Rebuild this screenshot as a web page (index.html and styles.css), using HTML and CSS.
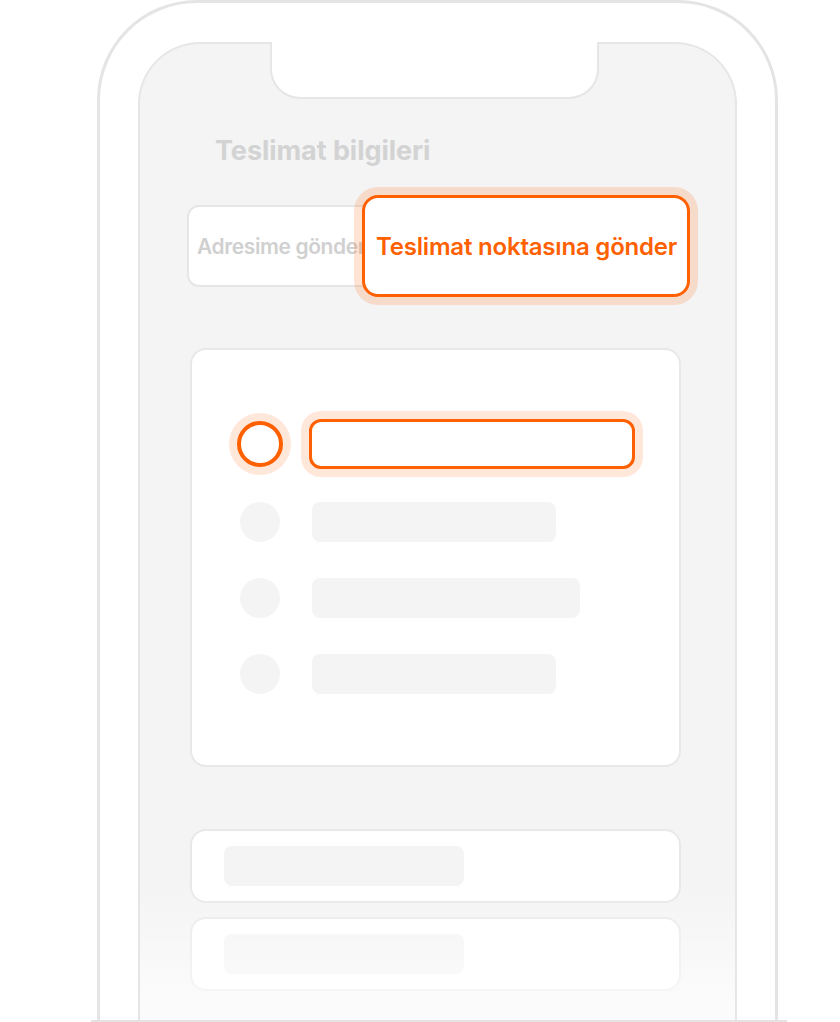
FILE: index.html
```html
<!DOCTYPE html>
<html lang="tr">
<head>
<meta charset="utf-8">
<title>Teslimat bilgileri</title>
<link rel="stylesheet" href="styles.css">
</head>
<body>
<div class="stage">
  <div class="phone">
    <div class="screen">
      <div class="notch"></div>
      <h1 class="title">Teslimat bilgileri</h1>
      <div class="segments">
        <div class="seg seg-off"><span class="seg-label">Adresime gönder</span></div>
        <div class="seg seg-on">Teslimat noktasına gönder</div>
      </div>
      <div class="card list">
        <div class="row row-active">
          <span class="radio-slot"><span class="radio radio-on"></span></span>
          <span class="field field-on"></span>
        </div>
        <div class="row">
          <span class="radio-slot"><span class="radio"></span></span>
          <span class="bar bar-short"></span>
        </div>
        <div class="row">
          <span class="radio-slot"><span class="radio"></span></span>
          <span class="bar bar-long"></span>
        </div>
        <div class="row">
          <span class="radio-slot"><span class="radio"></span></span>
          <span class="bar bar-short"></span>
        </div>
      </div>
      <div class="card slim first-slim"><span class="bar bar-slim"></span></div>
      <div class="card slim"><span class="bar bar-slim"></span></div>
      <div class="fade"></div>
    </div>
  </div>
</div>
</body>
</html>
```
FILE: styles.css
```css
* { box-sizing: border-box; }
html, body { margin: 0; padding: 0; background: #ffffff; }
body { font-family: Inter, "Noto Sans", "Liberation Sans", sans-serif; }

.stage {
  width: 696px;
  height: 1022px;
  margin-left: 91px;
  border-bottom: 2px solid #e3e3e3;
  overflow: hidden;
}

.phone {
  width: 681px;
  height: 1200px;
  margin-left: 6px;
  border: 3px solid #e4e4e4;
  border-bottom: none;
  border-radius: 100px 100px 0 0;
  padding: 39px 38px 0 38px;
  background: #ffffff;
}

.screen {
  position: relative;
  width: 599px;
  height: 1200px;
  background: #f4f4f4;
  border: 2px solid #e6e6e6;
  border-bottom: none;
  border-radius: 62px 62px 0 0;
  padding-top: 91px;
}

.notch {
  position: absolute;
  top: -2px;
  left: 130px;
  width: 329px;
  height: 57px;
  background: #ffffff;
  border: 2px solid #e6e6e6;
  border-top: none;
  border-radius: 0 0 30px 30px;
}

.title {
  margin: 0 0 0 75px;
  height: 32px;
  line-height: 32px;
  font-size: 27px;
  font-weight: 700;
  color: #d3d3d3;
  letter-spacing: -0.05px;
}

.segments {
  display: flex;
  align-items: center;
  height: 102px;
  margin: 28px 0 0 47px;
}

.seg {
  display: flex;
  align-items: center;
  background: #ffffff;
  white-space: nowrap;
}

.seg-off {
  width: 200px;
  height: 82px;
  border: 2px solid #e6e6e6;
  border-radius: 12px;
  padding-left: 8px;
  overflow: hidden;
  font-size: 21px;
  font-weight: 600;
  color: #d0d0d0;
  letter-spacing: -0.4px;
}

.seg-on {
  position: relative;
  width: 328px;
  height: 102px;
  margin-left: -25px;
  border: 3px solid #ff6000;
  border-radius: 16px;
  padding-left: 11px;
  font-size: 24px;
  font-weight: 600;
  color: #ff6000;
  letter-spacing: -0.2px;
  box-shadow: 0 0 0 8px rgba(255, 96, 0, 0.17);
}

.card {
  background: #ffffff;
  border: 2px solid #e8e8e8;
  border-radius: 16px;
  width: 491px;
  margin-left: 50px;
}

.list {
  margin-top: 51px;
  padding: 69px 0 71px 45px;
}

.row {
  display: flex;
  align-items: center;
  gap: 29px;
  margin-top: 36px;
}

.row-active {
  height: 50px;
  margin-top: 0;
  margin-bottom: -3px;
}

.radio-slot {
  display: flex;
  justify-content: center;
  align-items: center;
  width: 46px;
  flex: none;
}

.radio {
  display: block;
  width: 40px;
  height: 40px;
  border-radius: 50%;
  background: #f4f4f4;
}

.radio-on {
  width: 46px;
  height: 46px;
  background: #ffffff;
  border: 4px solid #ff6000;
  box-shadow: 0 0 0 8px rgba(255, 96, 0, 0.15);
}

.field-on {
  display: block;
  width: 326px;
  height: 50px;
  margin-left: -3px;
  border: 3px solid #ff6000;
  border-radius: 12px;
  background: #ffffff;
  box-shadow: 0 0 0 8px rgba(255, 96, 0, 0.15);
}

.bar {
  display: block;
  height: 40px;
  border-radius: 8px;
  background: #f4f4f4;
}

.bar-short { width: 244px; }
.bar-long { width: 268px; }

.slim {
  height: 74px;
  padding: 15px 0 15px 32px;
  margin-top: 14px;
}

.first-slim { margin-top: 62px; }

.bar-slim { width: 240px; }

.fade {
  position: absolute;
  left: 0;
  right: 0;
  top: 836px;
  bottom: 0;
  background: linear-gradient(to bottom, rgba(255,255,255,0) 0px, rgba(255,255,255,0.75) 140px, rgba(255,255,255,0.8) 300px);
}
```
